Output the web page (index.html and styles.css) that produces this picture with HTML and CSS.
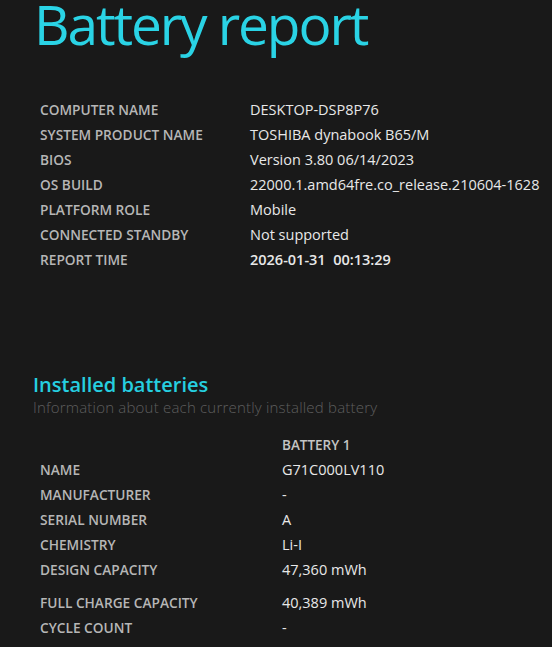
FILE: index.html
```html
<!DOCTYPE html>
<html>
<head>
<meta charset="utf-8">
<link rel="stylesheet" href="styles.css">
</head>
<body>
<div class="page">
  <h1 class="title">Battery report</h1>
  <div class="info">
    <div class="label">Computer name</div><div class="value">DESKTOP-DSP8P76</div>
    <div class="label">System product name</div><div class="value">TOSHIBA dynabook B65/M</div>
    <div class="label">BIOS</div><div class="value">Version 3.80 06/14/2023</div>
    <div class="label">OS build</div><div class="value">22000.1.amd64fre.co_release.210604-1628</div>
    <div class="label">Platform role</div><div class="value">Mobile</div>
    <div class="label">Connected standby</div><div class="value">Not supported</div>
    <div class="label">Report time</div><div class="value strong">2026-01-31&nbsp;&nbsp;00:13:29</div>
  </div>

  <h2 class="section">Installed batteries</h2>
  <div class="explanation">Information about each currently installed battery</div>

  <div class="batt">
    <div class="label"></div><div class="colhead">Battery 1</div>
    <div class="label">Name</div><div class="value">G71C000LV110</div>
    <div class="label">Manufacturer</div><div class="value">-</div>
    <div class="label">Serial number</div><div class="value">A</div>
    <div class="label">Chemistry</div><div class="value">Li-I</div>
    <div class="label">Design capacity</div><div class="value">47,360 mWh</div>
    <div class="label gap">Full charge capacity</div><div class="value gap">40,389 mWh</div>
    <div class="label">Cycle count</div><div class="value">-</div>
  </div>
</div>
</body>
</html>
```

FILE: styles.css
```css
html, body {
  margin: 0;
  padding: 0;
  background: #191919;
}
.page {
  padding-left: 33px;
  font-family: "Open Sans", "Noto Sans", sans-serif;
  color: #ececec;
}
.title {
  margin: -4px 0 0 0;
  padding-left: 1px;
  font-size: 55px;
  font-weight: 400;
  line-height: 56px;
  height: 62px;
  color: #2ad3e5;
  letter-spacing: -2.1px;
}
.info {
  display: grid;
  grid-template-columns: 210px auto;
  grid-auto-rows: 25px;
  align-items: center;
  margin-top: 39px;
  padding-left: 7px;
}
.label {
  font-size: 13.7px;
  font-weight: 600;
  color: #b6b6b6;
  text-transform: uppercase;
  white-space: nowrap;
}
.value {
  font-size: 14.5px;
  color: #e8e8e8;
  white-space: nowrap;
}
.value.strong {
  font-weight: 600;
}
.section {
  margin: 101px 0 0 0;
  font-size: 20px;
  line-height: 24px;
  font-weight: 600;
  color: #26cfe0;
}
.explanation {
  font-size: 15px;
  font-weight: 300;
  color: #5e5e5e;
  line-height: 20px;
  letter-spacing: 0.2px;
}
.batt {
  display: grid;
  grid-template-columns: 242px auto;
  grid-template-rows: repeat(6, 25px) 33px 25px;
  align-items: center;
  margin-top: 15px;
  padding-left: 7px;
}
.colhead {
  font-size: 13.5px;
  font-weight: 600;
  color: #c4c4c4;
  text-transform: uppercase;
}
.gap {
  align-self: end;
  line-height: 25px;
}
```
